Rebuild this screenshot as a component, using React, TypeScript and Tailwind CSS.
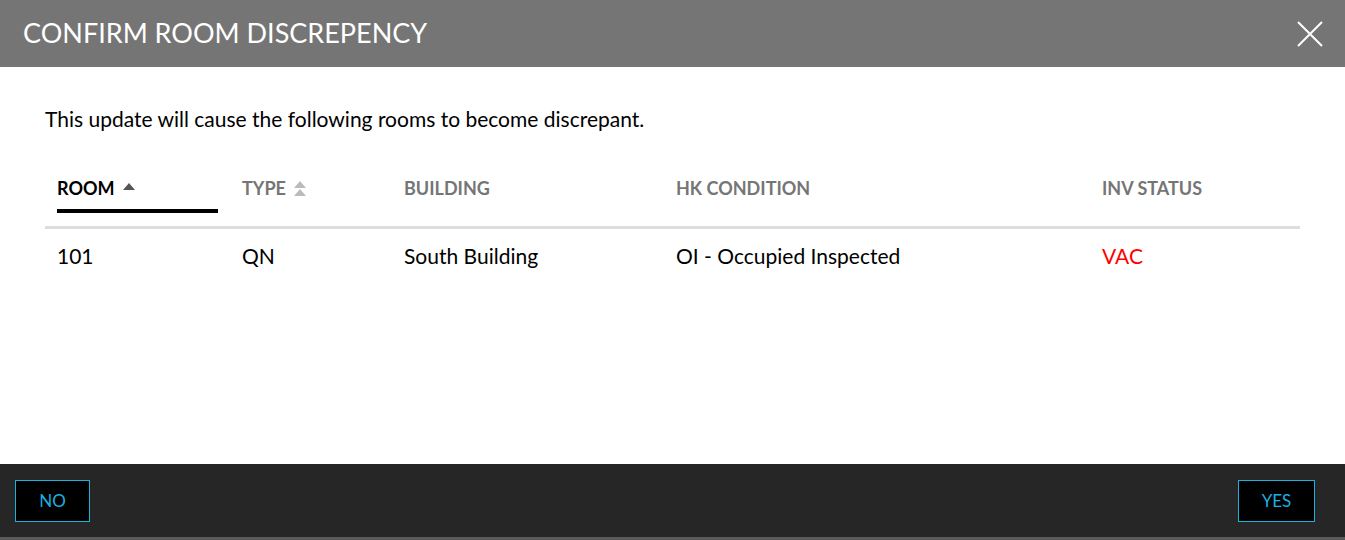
import React from "react";

const Up = ({ cls }: { cls: string }) => (
  <svg width="12" height="7" viewBox="0 0 12 7" className={cls}>
    <polygon points="6,0 12,7 0,7" fill="currentColor" />
  </svg>
);

export default function App() {
  const font = { fontFamily: "Lato, 'Open Sans', sans-serif" };
  return (
    <div className="w-[1345px] h-[540px] flex flex-col bg-white" style={font}>
      <div className="h-[67px] bg-[#757575] flex items-center justify-between pl-[23px] pr-[22px]">
        <div className="text-white text-[27px] leading-none pb-[3px]">CONFIRM ROOM DISCREPENCY</div>
        <svg width="26" height="26" viewBox="0 0 26 26" className="text-white">
          <path d="M1 1L25 25M25 1L1 25" stroke="currentColor" strokeWidth="2" />
        </svg>
      </div>
      <div className="flex-1 px-[45px] pt-[39px]">
        <div className="text-[21px] leading-[26px] text-black">This update will cause the following rooms to become discrepant.</div>
        <div className="mt-[46px] w-[1255px]">
          <div className="flex border-b-[3px] border-[#dddddd] text-[18px] font-bold text-[#757575] leading-none">
            <div className="w-[185px] px-[12px] flex flex-col">
              <div className="flex items-center gap-[8px] text-black h-[20px]">
                ROOM <Up cls="text-[#555555] mt-[-3px]" />
              </div>
              <div className="h-[4px] bg-black mt-[11px] mb-[13px]" />
            </div>
            <div className="w-[162px] px-[12px]">
              <div className="flex items-center gap-[8px] h-[20px]">
                TYPE
                <div className="flex flex-col gap-[1px] text-[#bbbbbb] mt-[1px]">
                  <Up cls="" />
                  <Up cls="" />
                </div>
              </div>
            </div>
            <div className="w-[272px] px-[12px]"><div className="h-[20px] flex items-center">BUILDING</div></div>
            <div className="w-[426px] px-[12px]"><div className="h-[20px] flex items-center">HK CONDITION</div></div>
            <div className="w-[210px] px-[12px]"><div className="h-[20px] flex items-center">INV STATUS</div></div>
          </div>
          <div className="flex text-[21px] text-black leading-none pt-[16px]">
            <div className="w-[185px] px-[12px]">101</div>
            <div className="w-[162px] px-[12px]">QN</div>
            <div className="w-[272px] px-[12px]">South Building</div>
            <div className="w-[426px] px-[12px]">OI - Occupied Inspected</div>
            <div className="w-[210px] px-[12px] text-[#ff0000]">VAC</div>
          </div>
        </div>
      </div>
      <div className="h-[76px] bg-[#262626] border-b-[3px] border-[#5a5a5a] flex items-center justify-between pl-[15px] pr-[30px]">
        <button className="w-[75px] h-[42px] bg-black border border-[#1ab0e0] text-[#1ab0e0] text-[17px] leading-none">NO</button>
        <button className="w-[77px] h-[42px] bg-black border border-[#1ab0e0] text-[#1ab0e0] text-[17px] leading-none">YES</button>
      </div>
    </div>
  );
}
